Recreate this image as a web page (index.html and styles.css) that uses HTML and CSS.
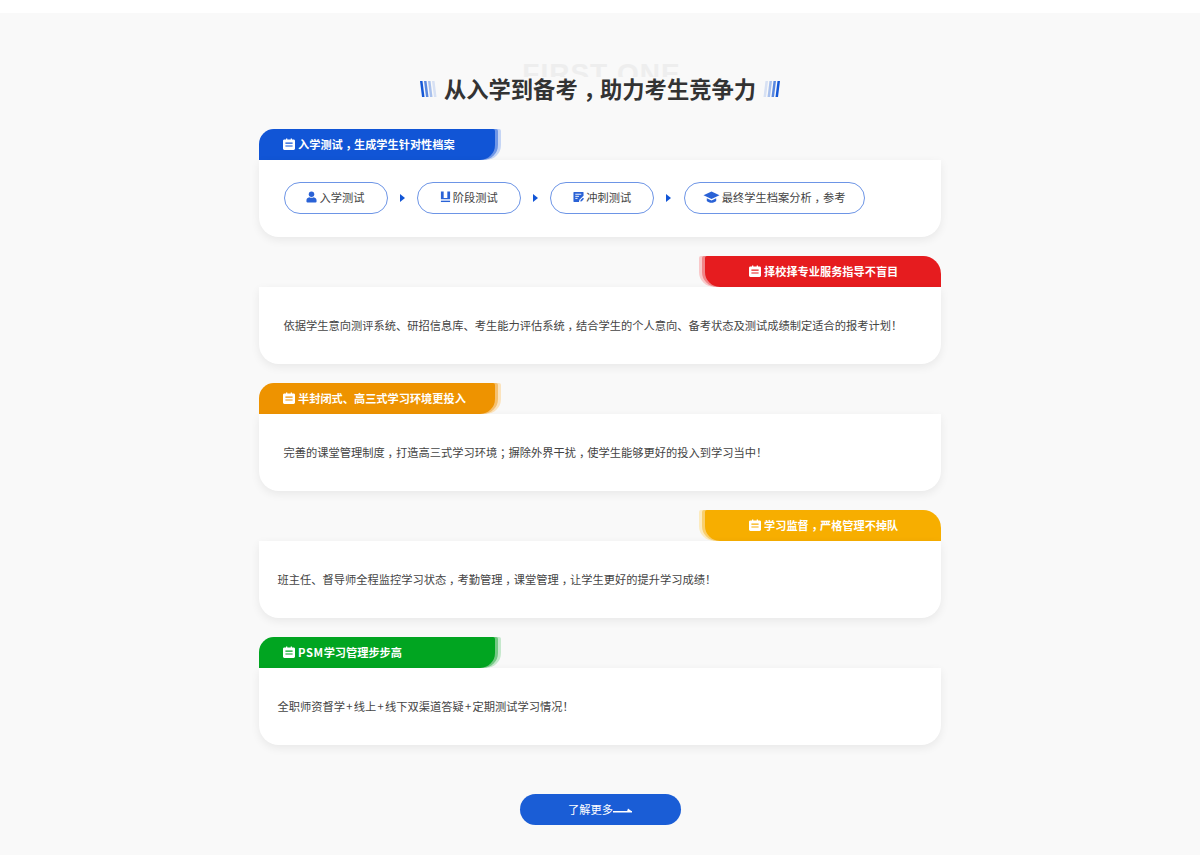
FILE: index.html
```html
<!DOCTYPE html>
<html lang="zh">
<head>
<meta charset="utf-8">
<title>从入学到备考</title>
<link rel="stylesheet" href="styles.css">
</head>
<body>
<svg class="defs" width="0" height="0" aria-hidden="true">
  <symbol id="cal" viewBox="0 0 12 12"><path d="M3 .4h1.300v1h3.400v-1H9v1h1.600c.8 0 1.400.6 1.400 1.300v7.900c0 .8-.6 1.400-1.400 1.400H1.400C.6 12 0 11.400 0 10.600V2.700c0-.7.6-1.300 1.400-1.300H3zM2.400 4.600v1.200h7.200V4.600zm0 2.800v1.200h7.200V7.400z" fill="#fff" fill-rule="evenodd"/></symbol>
</svg>
<main class="section">
  <header class="head">
    <div class="ghost">FIRST ONE</div>
    <h1 class="title">
      <svg class="stripes" viewBox="0 0 17 16" aria-hidden="true"><path d="M0 0h2.500l2 16H2z" fill="#1558d6"/><path d="M4 0h2.500l2 16H6z" fill="#1558d6" opacity=".7"/><path d="M8 0h2.500l2 16H10z" fill="#1558d6" opacity=".35"/><path d="M12 0h2.500l2 16H14z" fill="#1558d6" opacity=".15"/></svg>
      <span>从入学到备考<span class="p">，</span>助力考生竞争力</span>
      <svg class="stripes" viewBox="0 0 17 16" aria-hidden="true"><path d="M2.500 0H5L3 16H.5z" fill="#1558d6" opacity=".15"/><path d="M6.500 0H9L7 16H4.500z" fill="#1558d6" opacity=".35"/><path d="M10.500 0H13l-2 16H8.500z" fill="#1558d6" opacity=".7"/><path d="M14.500 0H17l-2 16h-2.500z" fill="#1558d6"/></svg>
    </h1>
  </header>

  <section class="card">
    <div class="tab tab-blue"><svg class="tab-icon"><use href="#cal"/></svg><span>入学测试<span class="p">，</span>生成学生针对性档案</span></div>
    <div class="body">
      <div class="steps">
        <div class="chip">
          <svg class="chip-icon" viewBox="0 0 12 12"><circle cx="6" cy="3" r="3" fill="#2a62d6"/><path d="M1.500 12C.7 12 .5 11.500 .5 11V9.500C.5 7.800 2 6.700 3.500 6.300c1.500.8 3.500.8 5 0C10 6.700 11.500 7.800 11.500 9.500V11c0 .5-.2 1-1 1z" fill="#2a62d6"/></svg><span>入学测试</span>
        </div>
        <span class="arrow"></span>
        <div class="chip">
          <svg class="chip-icon" viewBox="0 0 12 12"><path d="M1 0h3v7h4V0h3v8.500H1z" fill="#2a62d6"/><path d="M1 10h10v1.500H1z" fill="#2a62d6"/></svg><span>阶段测试</span>
        </div>
        <span class="arrow"></span>
        <div class="chip">
          <svg class="chip-icon" viewBox="0 0 12 12"><path d="M1 .5h10c.4 0 .5.2.5.5v3.500L7 9l-.5 2.500H1c-.3 0-.5-.2-.5-.5V1c0-.3.200-.5.500-.5z" fill="#2a62d6"/><path d="M2.500 3h6.500M2.500 5.300h4M2.500 7.500h2.500" stroke="#fff"/><path d="M8 11l.3-1.800 2.500-2.500 1.200 1.300-2.400 2.500z" fill="#2a62d6"/></svg><span>冲刺测试</span>
        </div>
        <span class="arrow"></span>
        <div class="chip chip-wide">
          <svg class="chip-icon chip-icon-cap" viewBox="0 0 16 12"><path d="M8 .5L16 4.200 8 8 0 4.200z" fill="#2a62d6"/><path d="M3.300 7.200L8 9.400l4.700-2.200v2.700C11.500 11 9.800 11.700 8 11.700S4.500 11 3.300 9.900z" fill="#2a62d6"/></svg><span>最终学生档案分析<span class="p">，</span>参考</span>
        </div>
      </div>
    </div>
  </section>

  <section class="card">
    <div class="tab tab-right tab-red"><svg class="tab-icon"><use href="#cal"/></svg><span>择校择专业服务指导不盲目</span></div>
    <div class="body"><p class="text">依据学生意向测评系统、研招信息库、考生能力评估系统<span class="p">，</span>结合学生的个人意向、备考状态及测试成绩制定适合的报考计划<span class="e">！</span></p></div>
  </section>

  <section class="card">
    <div class="tab tab-orange"><svg class="tab-icon"><use href="#cal"/></svg><span>半封闭式、高三式学习环境更投入</span></div>
    <div class="body"><p class="text">完善的课堂管理制度<span class="p">，</span>打造高三式学习环境<span class="p">；</span>摒除外界干扰<span class="p">，</span>使学生能够更好的投入到学习当中<span class="e">！</span></p></div>
  </section>

  <section class="card">
    <div class="tab tab-right tab-yellow"><svg class="tab-icon"><use href="#cal"/></svg><span>学习监督<span class="p">，</span>严格管理不掉队</span></div>
    <div class="body"><p class="text text-tight">班主任、督导师全程监控学习状态<span class="p">，</span>考勤管理<span class="p">，</span>课堂管理<span class="p">，</span>让学生更好的提升学习成绩<span class="e">！</span></p></div>
  </section>

  <section class="card">
    <div class="tab tab-green"><svg class="tab-icon"><use href="#cal"/></svg><span><span class="latin">PSM</span>学习管理步步高</span></div>
    <div class="body"><p class="text text-tight">全职师资督学<span class="plus">+</span>线上<span class="plus">+</span>线下双渠道答疑<span class="plus">+</span>定期测试学习情况<span class="e">！</span></p></div>
  </section>

  <div class="more-row">
    <a class="more"><span>了解更多</span><svg class="more-arrow" viewBox="0 0 19 6"><path d="M0 4h19v1.500H0zM14 4.500L15 1.500 19 4.500z" fill="#fff"/></svg></a>
  </div>
</main>
</body>
</html>
```

FILE: styles.css
```css
* { box-sizing: border-box; }
html, body { margin: 0; padding: 0; background: #fff; }
body {
  padding-top: 13px;
  font-family: "Noto Sans CJK SC", "Noto Sans", sans-serif;
  color: #333;
}
.defs { position: absolute; }
.p { font-feature-settings: "halt"; padding: 0 0.25em; }
.e { font-feature-settings: "halt"; padding: 0 0.5em 0 0; }
.plus { padding: 0 0.11em; }
.latin { letter-spacing: 0.6px; }
.section {
  background: #f9f9f9;
  height: 842px;
  padding-top: 47px;
  display: flex;
  flex-direction: column;
  align-items: center;
}
.head { position: relative; width: 682px; height: 69px; padding-top: 17px; }
.ghost {
  position: absolute;
  left: 0; right: 0; top: -2px;
  text-align: center;
  text-indent: 3px;
  font-family: "Liberation Sans", sans-serif;
  font-weight: 700;
  font-size: 28px;
  line-height: 32px;
  letter-spacing: 1px;
  color: #eeeeee;
}
.title {
  position: relative;
  margin: 0;
  height: 25px;
  padding-bottom: 2px;
  background: #f9f9f9;
  display: flex;
  justify-content: center;
  align-items: center;
  gap: 7px;
  font-size: 22.3px;
  font-weight: 700;
  line-height: 23px;
  color: #333;
}
.stripes { width: 17px; height: 16px; flex: none; }
.card { width: 682px; margin-bottom: 19px; display: flex; flex-direction: column; }
.tab {
  align-self: flex-start;
  width: 236px;
  height: 31px;
  padding: 0 0 2px 24px;
  display: flex;
  align-items: center;
  gap: 3px;
  font-size: 11.2px;
  font-weight: 700;
  color: #fff;
  border-radius: 15px 2px 15px 0;
}
.tab-right {
  align-self: flex-end;
  border-radius: 2px 18px 0 15px;
  padding-left: 44px;
}
.tab-icon { width: 12px; height: 12px; flex: none; }
.tab-blue { background: #1155d6; box-shadow: 3px 0 0 #6f96e6, 6px 0 0 #c5d5f5; }
.tab-orange { background: #ee9300; box-shadow: 3px 0 0 #f5c070, 6px 0 0 #fbe3bd; }
.tab-green { background: #01a521; box-shadow: 3px 0 0 #74c884, 6px 0 0 #c5e8cc; }
.tab-red { background: #e61c1f; box-shadow: -3px 0 0 #f08688, -6px 0 0 #f9c9ca; }
.tab-yellow { background: #f7ae00; box-shadow: -3px 0 0 #f9cf6e, -6px 0 0 #fcebc0; }
.body {
  height: 77px;
  background: #fff;
  border-radius: 0 0 20px 20px;
  box-shadow: 0 3px 10px rgba(0, 0, 0, 0.07);
  display: flex;
  align-items: center;
  padding: 0 24px 2px 24.500px;
}
.text { margin: 0; font-size: 11.25px; line-height: 20px; color: #444; white-space: nowrap; }
.text-tight { margin-left: -6px; }
.steps { display: flex; align-items: center; }
.chip {
  width: 104px;
  height: 32px;
  border: 1px solid #6d95e6;
  border-radius: 16px;
  background: #fff;
  padding-bottom: 1px;
  display: flex;
  align-items: center;
  justify-content: center;
  gap: 2px;
  font-size: 11.25px;
  color: #444;
}
.chip-wide { width: 181px; }
.chip-icon { width: 11px; height: 12px; flex: none; }
.chip-icon-cap { width: 17px; height: 12px; }
.arrow {
  width: 0; height: 0;
  margin: 0 12.200px 0 12.200px;
  border-left: 5px solid #1155d6;
  border-top: 4.500px solid transparent;
  border-bottom: 4.500px solid transparent;
}
.more-row { margin-top: 30px; display: flex; justify-content: center; }
.more {
  width: 161px;
  height: 31px;
  border-radius: 16px;
  background: #1a5dd6;
  color: #fff;
  font-size: 11.25px;
  padding-bottom: 1px;
  display: flex;
  align-items: center;
  justify-content: center;
}
.more-arrow { width: 19px; height: 6px; margin-top: 2px; }
```
